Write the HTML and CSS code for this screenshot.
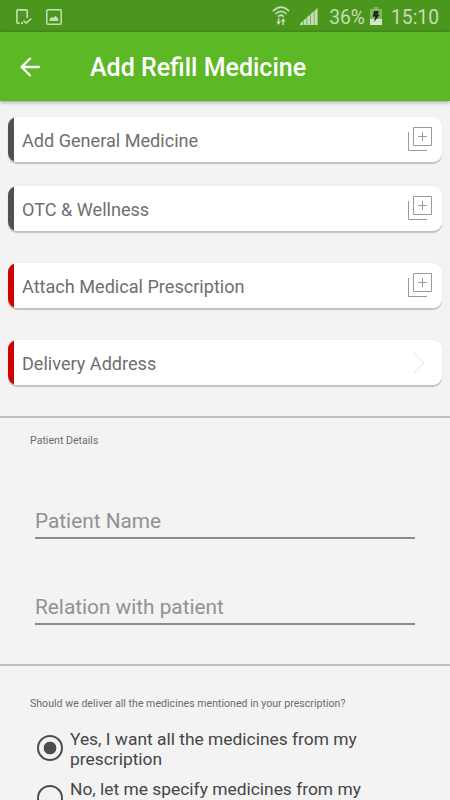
FILE: index.html
```
<!DOCTYPE html>
<html lang="en">
<head>
    <meta charset="UTF-8">
    <meta name="viewport" content="width=device-width, initial-scale=1.0">
    <title>Add Refill Medicine</title>
    <link rel="stylesheet" href="styles.css">
</head>
<body>

    <!-- Status bar -->
    <div class="status-bar">
        <svg class="icon-device" width="16" height="16" viewBox="0 0 16 16" fill="none" stroke="currentColor" stroke-width="1.6">
            <path d="M11.2 9V1.8Q11.2.9 10.3.9H1.8Q.9.9.9 1.8V13.2Q.9 14.1 1.8 14.1H3.5M5 14.1H7"/>
            <path d="M7.5 11.5L10.2 14.2L15.3 9.5"/>
        </svg>
        <svg class="icon-image" width="16" height="16" viewBox="0 0 16 16">
            <rect x=".8" y=".8" width="14.4" height="14.4" rx="1" fill="none" stroke="currentColor" stroke-width="1.5"/>
            <path d="M3.5 12V10L5.7 7.8L7.3 9L9.5 6.8L12.3 9.8V12Z" fill="currentColor"/>
        </svg>
        <span class="spacer"></span>
        <svg class="icon-wifi" width="18" height="20" viewBox="0 0 18 20" fill="none" stroke="currentColor" stroke-width="1.7">
            <path d="M.8 5.2Q9-2.8 17.2 5.2M3.4 8Q9 2.6 14.6 8M6 10.6Q9 7.9 12 10.6"/>
            <path d="M6.6 12V17.5M11.2 19V13.5" stroke-width="1.5"/>
            <path d="M4.2 15.5H9L6.6 19ZM8.8 15.5H13.6L11.2 12Z" fill="currentColor" stroke="none"/>
        </svg>
        <svg class="icon-signal" width="18" height="17" viewBox="0 0 18 17" fill="currentColor">
            <path d="M0 17V15.8L3 13V17ZM3.6 17V12.4L6.6 9.6V17ZM7.2 17V9L10.2 6.4V17ZM10.8 17V5.8L13.8 3.2V17ZM14.4 17V2.7L17.6 0V17Z"/>
        </svg>
        <span class="battery-text">36%</span>
        <svg class="icon-battery" width="12" height="18" viewBox="0 0 12 18">
            <path d="M3.5 0H8.5V2H12V18H0V2H3.5Z" fill="#81b661"/>
            <path d="M0 12H12V18H0Z" fill="#d5e7ca"/>
            <path d="M4 4H9L7.5 7.5H10L4 15L5.3 9.7H2.7Z" fill="#1c2b14"/>
        </svg>
        <span class="clock">15:10</span>
    </div>

    <!-- App bar -->
    <header class="app-bar">
        <svg width="20" height="20" viewBox="0 0 20 20" fill="none" stroke="#fff" stroke-width="2.3">
            <path d="M19.8 10H2M10.6 1L1.6 10L10.6 19"/>
        </svg>
        <h1>Add Refill Medicine</h1>
    </header>

    <!-- Refill options -->
    <div class="options">
        <div class="card">
            <span>Add General Medicine</span>
            <svg class="icon-add" width="25" height="24" viewBox="0 0 25 24"><path d="M5.5.5H23.5V18.5H5.5ZM.5 5V23.5H19M14.5 5.2V13.8M10.2 9.5H18.8"/></svg>
        </div>
        <div class="card">
            <span>OTC &amp; Wellness</span>
            <svg class="icon-add" width="25" height="24" viewBox="0 0 25 24"><path d="M5.5.5H23.5V18.5H5.5ZM.5 5V23.5H19M14.5 5.2V13.8M10.2 9.5H18.8"/></svg>
        </div>
        <div class="card required">
            <span>Attach Medical Prescription</span>
            <svg class="icon-add" width="25" height="24" viewBox="0 0 25 24"><path d="M5.5.5H23.5V18.5H5.5ZM.5 5V23.5H19M14.5 5.2V13.8M10.2 9.5H18.8"/></svg>
        </div>
        <div class="card required">
            <span>Delivery Address</span>
            <svg class="icon-next" width="12" height="22" viewBox="0 0 12 22"><path d="M1 1L11 11L1 21"/></svg>
        </div>
    </div>

    <!-- Patient details -->
    <section class="patient">
        <h2>Patient Details</h2>
        <input type="text" name="patient_name" placeholder="Patient Name">
        <input type="text" name="relation" placeholder="Relation with patient">
    </section>

    <!-- Delivery choice -->
    <section class="delivery">
        <h2>Should we deliver all the medicines mentioned in your prescription?</h2>
        <label>
            <input type="radio" name="deliver_all" value="Yes" checked>
            <span>Yes, I want all the medicines from my prescription</span>
        </label>
        <label>
            <input type="radio" name="deliver_all" value="No">
            <span>No, let me specify medicines from my prescription</span>
        </label>
    </section>

</body>
</html>
```
FILE: styles.css
```
:root {
    --primary-color: #5cb825; /* Green */
    --status-color: #4b961d; /* Dark Green */
    --background-color: #f3f3f3;
    --required-color: #cf0000; /* Red */
    --card-text-color: #6f6f6f;
    --text-color: #454545;
}

* {
    box-sizing: border-box;
}

body {
    font-family: Roboto, sans-serif;
    background-color: var(--background-color);
    margin: 0;
    height: 800px;
    overflow: hidden;
}

.status-bar {
    display: flex;
    align-items: flex-start;
    height: 32px;
    padding: 0 11px 0 16px;
    background-color: var(--status-color);
    color: #c5deb6;
    font-size: 19.3px;
    line-height: 35px;
}

.icon-device {
    margin-top: 9px;
}

.icon-image {
    margin: 9px 0 0 14px;
}

.spacer {
    flex: 1;
}

.icon-wifi {
    margin-top: 6px;
}

.icon-signal {
    margin: 8px 11px 0 10px;
}

.icon-battery {
    margin: 7px 9px 0 5px;
}

.app-bar {
    display: flex;
    align-items: center;
    gap: 50px;
    height: 69px;
    padding: 0 20px;
    background-color: var(--primary-color);
    box-shadow: 0 1px 4px rgba(0, 0, 0, 0.4);
}

.app-bar h1 {
    margin: 2px 0 0;
    color: #fff;
    font-size: 25px;
    font-weight: 500;
}

.options {
    height: 315px;
    padding: 16px 8px 0;
}

.card {
    display: flex;
    justify-content: space-between;
    align-items: center;
    height: 45px;
    margin-bottom: 24px;
    padding: 0 9px 0 14px;
    border-radius: 9px;
    background: linear-gradient(to right, #515151 6px, #fff 6px);
    box-shadow: 0 2px 1px rgba(0, 0, 0, 0.2), 0 0 1px rgba(0, 0, 0, 0.15);
    color: var(--card-text-color);
    font-size: 18.1px;
}

.card span {
    padding-top: 2px;
}

.card .icon-add {
    margin-bottom: 1px;
}

.card.required {
    margin: 32px 0 31px;
    background: linear-gradient(to right, var(--required-color) 6px, #fff 6px);
}

.icon-add,
.icon-next {
    fill: none;
    stroke: #999;
}

.icon-next {
    margin-right: 8px;
    stroke: #e2e2e2;
}

.patient {
    height: 248px;
    padding: 16px 35px 0;
    border-top: 2px solid #bebebe;
}

h2 {
    margin: 0 -5px;
    color: #6b6b6b;
    font-size: 10.6px;
    font-weight: 400;
    line-height: 14px;
}

input[type="text"] {
    display: block;
    width: 100%;
    height: 35px;
    margin-top: 51px;
    padding: 0;
    border: none;
    border-bottom: 2px solid #8c8c8c;
    background: none;
    font-family: inherit;
    font-size: 20.8px;
    outline: none;
}

h2 + input[type="text"] {
    margin-top: 56px;
}

input[type="text"]::placeholder {
    color: #919191;
}

.delivery {
    padding: 31px 35px 0;
    border-top: 2px solid #bebebe;
}

label {
    display: flex;
    align-items: center;
    gap: 7px;
    height: 40px;
    margin-bottom: 10px;
    padding-left: 2px;
    color: var(--text-color);
    font-size: 17.4px;
    line-height: 20px;
}

h2 + label {
    margin-top: 18px;
}

label span {
    width: 300px;
}

input[type="radio"] {
    appearance: none;
    flex: none;
    width: 26px;
    height: 26px;
    margin: 0 0 3px;
    border: 2px solid #4d4d4d;
    border-radius: 50%;
}

input[type="radio"]:checked {
    background: radial-gradient(circle, #4d4d4d 6px, transparent 6.7px);
}
```
